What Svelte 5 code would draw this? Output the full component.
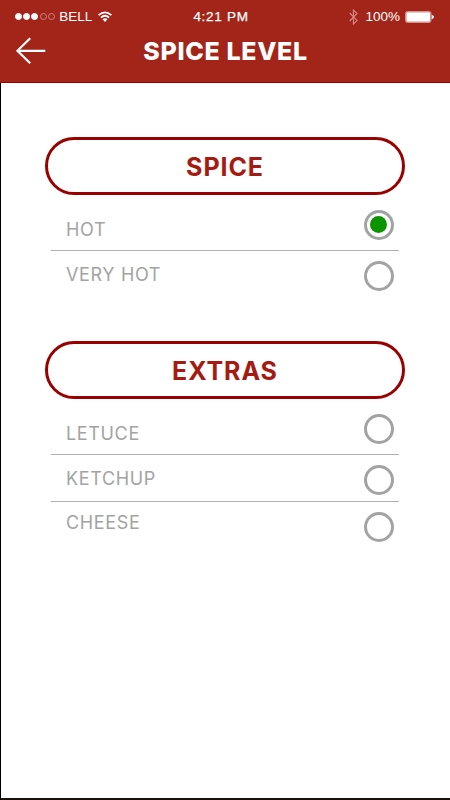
<script>
  let groups = [
    {
      title: 'SPICE',
      options: [
        { label: 'HOT', checked: true },
        { label: 'VERY HOT', checked: false }
      ]
    },
    {
      title: 'EXTRAS',
      options: [
        { label: 'LETUCE', checked: false },
        { label: 'KETCHUP', checked: false },
        { label: 'CHEESE', checked: false }
      ]
    }
  ];

  const signal = [true, true, true, false, false];

  function toggle(option) {
    option.checked = !option.checked;
    groups = groups;
  }
</script>

<div class="screen">
  <header>
    <div class="status">
      <div class="carrier">
        <div class="signal">
          {#each signal as on}
            <span class="dot" class:on></span>
          {/each}
        </div>
        <span class="network">BELL</span>
        <svg class="wifi" width="14" height="12" viewBox="0 0 14 12">
          <g fill="none" stroke="#fff" stroke-width="1.7">
            <path d="M0.6 4.1Q7-1.4 13.4 4.1" />
            <path d="M2.9 6.6Q7 2.9 11.1 6.6" />
          </g>
          <path d="M4.5 8.2Q7 6.1 9.5 8.2L7 11Z" fill="#fff" />
        </svg>
      </div>
      <span class="time">4:21 PM</span>
      <div class="power">
        <svg class="bluetooth" width="9" height="16" viewBox="0 0 9 16">
          <path d="M0.7 4L8 11.4L4.4 15V1L8 4.5L0.7 12" fill="none" stroke="#d58c86" stroke-width="1.1" />
        </svg>
        <span class="percent">100%</span>
        <svg class="battery" width="29" height="12" viewBox="0 0 29 12">
          <rect x="0.5" y="0.5" width="25.5" height="11" rx="1.8" fill="none" stroke="#d9928d" />
          <rect x="1.3" y="1.3" width="24" height="9.4" rx="1" fill="#fff" />
          <path d="M26.7 3.8Q29 4.5 29 6T26.7 8.2Z" fill="#fff" />
        </svg>
      </div>
    </div>
    <div class="nav">
      <button class="back" aria-label="Back">
        <svg width="30" height="28" viewBox="0 0 30 28">
          <path d="M14.2 1.2L1.4 13.8L14.2 26.3M1.4 13.8H29.3" fill="none" stroke="#fff" stroke-width="2.2" />
        </svg>
      </button>
      <h1>SPICE LEVEL</h1>
    </div>
  </header>

  <main>
    {#each groups as group}
      <section>
        <h2>{group.title}</h2>
        <ul>
          {#each group.options as option}
            <li>
              <span class="label">{option.label}</span>
              <button
                class="radio"
                class:checked={option.checked}
                aria-label={option.label}
                on:click={() => toggle(option)}
              ></button>
            </li>
          {/each}
        </ul>
      </section>
    {/each}
  </main>
</div>

<style>
  :global(body) {
    margin: 0;
    background: #fff;
  }

  .screen {
    display: flex;
    flex-direction: column;
    width: 450px;
    height: 800px;
    box-sizing: border-box;
    font-family: Inter, "Liberation Sans", sans-serif;
    overflow: hidden;
  }

  header {
    height: 83px;
    box-sizing: border-box;
    background: #a32419;
    border-bottom: 1px solid #990000;
    color: #fff;
  }

  .status {
    display: grid;
    grid-template-columns: 1fr auto 1fr;
    align-items: center;
    height: 32px;
    padding: 1px 16px 0 15px;
    box-sizing: border-box;
    font-family: "Liberation Sans", sans-serif;
    font-size: 13.5px;
    line-height: 16px;
  }

  .carrier,
  .power,
  .signal {
    display: flex;
    align-items: center;
  }

  .signal {
    gap: 1.2px;
  }

  .dot {
    width: 7px;
    height: 7px;
    box-sizing: border-box;
    border: 1px solid #cf8580;
    border-radius: 50%;
  }

  .dot.on {
    border-color: #fff;
    background: #fff;
  }

  .network {
    margin-left: 4.5px;
  }

  .wifi {
    margin-left: 6px;
  }

  .time {
    position: relative;
    left: -3.5px;
    letter-spacing: 0.7px;
    -webkit-text-stroke: 0.25px #fff;
  }

  .power {
    justify-content: flex-end;
  }

  .percent {
    margin: 0 5px 0 7px;
  }

  .nav {
    display: flex;
    align-items: center;
    height: 38px;
  }

  button {
    padding: 0;
    border: 0;
    background: none;
    cursor: pointer;
  }

  .back {
    width: 30px;
    height: 28px;
    margin-left: 16px;
  }

  .back svg {
    display: block;
  }

  h1 {
    flex: 1;
    margin: 0 45px 0 0;
    font-size: 25px;
    line-height: 30px;
    font-weight: 800;
    letter-spacing: 0.65px;
    text-align: center;
    white-space: nowrap;
  }

  main {
    flex: 1;
    padding: 54px 45px 0 44px;
    border-left: 1px solid #000;
    border-bottom: 2px solid #17100d;
  }

  section {
    height: 204px;
  }

  h2 {
    height: 58px;
    margin: 0;
    box-sizing: border-box;
    border: 3px solid #990000;
    border-radius: 29px;
    color: #a51b12;
    font-size: 25px;
    line-height: 54px;
    font-weight: 700;
    letter-spacing: 0.9px;
    text-align: center;
  }

  ul {
    margin: 0 6px;
    padding: 0;
    list-style: none;
  }

  li {
    display: flex;
    justify-content: space-between;
    align-items: flex-start;
    height: 47px;
    padding: 0 5.5px 0 15px;
    box-sizing: border-box;
    border-bottom: 1px solid #b0b0b0;
  }

  li:first-child {
    height: 56px;
  }

  li:last-child {
    border-bottom: 0;
  }

  .label {
    margin-top: 12px;
    color: #a3a3a3;
    font-size: 18px;
    line-height: 23px;
    letter-spacing: 0.65px;
  }

  .radio {
    display: flex;
    align-items: center;
    justify-content: center;
    width: 30px;
    height: 30px;
    margin-top: 10px;
    box-sizing: border-box;
    border: 3px solid #a3a3a3;
    border-radius: 50%;
  }

  .radio.checked::before {
    content: "";
    width: 17px;
    height: 17px;
    border-radius: 50%;
    background: #0b9400;
  }

  li:first-child .label {
    margin-top: 23px;
  }

  li:first-child .radio {
    margin-top: 14.5px;
  }

  li:nth-child(3) .label {
    margin-top: 9px;
  }
</style>
